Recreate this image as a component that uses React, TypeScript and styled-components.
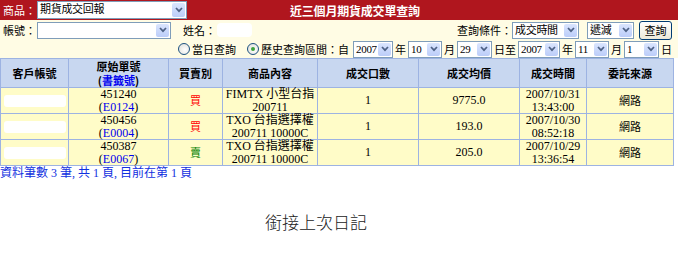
import styled, { createGlobalStyle } from 'styled-components';

const GlobalStyle = createGlobalStyle`
  body {
    margin: 0;
    background: #fff;
    font-family: "Liberation Serif", "Noto Sans CJK TC", serif;
    font-size: 12px;
    color: #000;
  }
`;

const cjk = `"Noto Sans CJK TC", "Liberation Sans", sans-serif`;

const rows = [
  {
    no: '451240',
    mark: 'E0124',
    side: '買',
    buy: true,
    item: ['FIMTX 小型台指', '200711'],
    qty: '1',
    price: '9775.0',
    time: ['2007/10/31', '13:43:00'],
  },
  {
    no: '450456',
    mark: 'E0004',
    side: '買',
    buy: true,
    item: ['TXO 台指選擇權', '200711 10000C'],
    qty: '1',
    price: '193.0',
    time: ['2007/10/30', '08:52:18'],
  },
  {
    no: '450387',
    mark: 'E0067',
    side: '賣',
    buy: false,
    item: ['TXO 台指選擇權', '200711 10000C'],
    qty: '1',
    price: '205.0',
    time: ['2007/10/29', '13:36:54'],
  },
];

const Chevron = () => (
  <svg width="8" height="6" viewBox="0 0 8 6">
    <path d="M1 1 L4 4.2 L7 1" fill="none" stroke="#4d6185" strokeWidth="1.7" />
  </svg>
);

const Select = ({ w, h = 17, value = '', ml = 0 }: { w: number; h?: number; value?: string; ml?: number }) => (
  <SelectBox $w={w} $h={h} $ml={ml}>
    <SelectValue>{value}</SelectValue>
    <ArrowBtn>
      <Chevron />
    </ArrowBtn>
  </SelectBox>
);

const App = () => {
  return (
    <>
      <GlobalStyle />
      <TopBar>
        <BarLabel>商品：</BarLabel>
        <Select w={150} h={18} value="期貨成交回報" />
        <Title>近三個月期貨成交單查詢</Title>
      </TopBar>

      <FormRow>
        <Label $w={34}>帳號：</Label>
        <Select w={134} />
        <Label $ml={12}>姓名：</Label>
        <Blank />
        <Spacer />
        <Label>查詢條件：</Label>
        <Select w={67} value="成交時間" />
        <Select w={47} value="遞減" ml={8} />
        <QueryBtn>查詢</QueryBtn>
      </FormRow>

      <RangeRow>
        <Radio />
        <Label $ml={2}>當日查詢</Label>
        <Radio $checked $ml={11} />
        <Label $ml={2}>歷史查詢區間：自</Label>
        <Select w={40} value="2007" ml={4} />
        <Unit>年</Unit>
        <Select w={34} value="10" />
        <Unit>月</Unit>
        <Select w={35} value="29" />
        <Unit>日至</Unit>
        <Select w={42} value="2007" />
        <Unit>年</Unit>
        <Select w={34} value="11" />
        <Unit>月</Unit>
        <Select w={35} value="1" />
        <Unit>日</Unit>
      </RangeRow>

      <Table>
        <colgroup>
          <col style={{ width: 68 }} />
          <col style={{ width: 100 }} />
          <col style={{ width: 54 }} />
          <col style={{ width: 95 }} />
          <col style={{ width: 101 }} />
          <col style={{ width: 101 }} />
          <col style={{ width: 67 }} />
          <col style={{ width: 87 }} />
        </colgroup>
        <thead>
          <tr>
            <Th>客戶帳號</Th>
            <Th>
              原始單號
              <br />(<BlueBold>書籤號</BlueBold>)
            </Th>
            <Th>買賣別</Th>
            <Th>商品內容</Th>
            <Th>成交口數</Th>
            <Th>成交均價</Th>
            <Th>成交時間</Th>
            <Th>委託來源</Th>
          </tr>
        </thead>
        <tbody>
          {rows.map((r) => (
            <tr key={r.no}>
              <Td $left>
                <Hidden />
              </Td>
              <Td>
                {r.no}
                <br />(<Blue>{r.mark}</Blue>)
              </Td>
              <Td>
                <Side $buy={r.buy}>{r.side}</Side>
              </Td>
              <Td>
                {r.item[0]}
                <br />
                {r.item[1]}
              </Td>
              <Td>{r.qty}</Td>
              <Td>{r.price}</Td>
              <Td>
                {r.time[0]}
                <br />
                {r.time[1]}
              </Td>
              <Td>
                <Cjk>網路</Cjk>
              </Td>
            </tr>
          ))}
        </tbody>
      </Table>

      <Summary>資料筆數 3 筆, 共 1 頁, 目前在第 1 頁</Summary>

      <Note>銜接上次日記</Note>
    </>
  );
};

export default App;

/* ---------------- styled-components ---------------- */

const TopBar = styled.div`
  height: 20px;
  background: #b0161e;
  display: flex;
  align-items: center;
  padding-left: 3px;
`;

const BarLabel = styled.span`
  width: 34px;
  color: #fff;
  font-family: ${cjk};
  font-size: 11px;
`;

const Title = styled.div`
  margin-left: 103px;
  color: #fff;
  font-family: ${cjk};
  font-size: 12px;
  font-weight: bold;
  letter-spacing: -0.2px;
`;

const FormRow = styled.div`
  height: 20px;
  background: #fffce4;
  display: flex;
  align-items: center;
  padding: 0 6px 0 3px;
`;

const RangeRow = styled.div`
  height: 18px;
  background: #fffce4;
  display: flex;
  align-items: center;
  padding-left: 178px;
`;

const Label = styled.span<{ $ml?: number; $w?: number }>`
  width: ${({ $w }) => ($w ? `${$w}px` : 'auto')};
  margin-left: ${({ $ml }) => $ml ?? 0}px;
  font-family: ${cjk};
  font-size: 11px;
  white-space: nowrap;
  flex: none;
`;

const Unit = styled.span`
  margin: 0 2px;
  font-family: ${cjk};
  font-size: 11px;
  white-space: nowrap;
`;

const Spacer = styled.div`
  flex: 1;
`;

const Blank = styled.div`
  width: 35px;
  height: 14px;
  margin-left: 1px;
  background: #fff;
  border-radius: 4px;
`;

const SelectBox = styled.div<{ $w: number; $h: number; $ml: number }>`
  width: ${({ $w }) => $w}px;
  height: ${({ $h }) => $h}px;
  margin-left: ${({ $ml }) => $ml}px;
  box-sizing: border-box;
  border: 1px solid #7f9db9;
  background: #fff;
  display: flex;
  align-items: stretch;
  flex: none;
`;

const SelectValue = styled.span`
  flex: 1;
  min-width: 0;
  padding-left: 2px;
  font-family: "Liberation Serif", "Noto Sans CJK TC", serif;
  font-size: 11px;
  line-height: 15px;
  letter-spacing: -0.3px;
  white-space: nowrap;
  overflow: hidden;
`;

const ArrowBtn = styled.span`
  width: 13px;
  margin: 1px;
  background: linear-gradient(#dae5fe, #bccdf9);
  border-radius: 2px;
  display: flex;
  align-items: center;
  justify-content: center;
  flex: none;
`;

const QueryBtn = styled.button`
  width: 33px;
  height: 19px;
  margin-left: 5px;
  padding: 0;
  border: 1px solid #003c74;
  border-radius: 3px;
  background: linear-gradient(#fff, #ece9d8);
  font-family: ${cjk};
  font-size: 11px;
  line-height: 15px;
  color: #000;
`;

const Radio = styled.span<{ $checked?: boolean; $ml?: number }>`
  position: relative;
  width: 12px;
  height: 12px;
  margin-left: ${({ $ml }) => $ml ?? 0}px;
  box-sizing: border-box;
  border: 1px solid #1c5180;
  border-radius: 50%;
  background: radial-gradient(circle at 60% 60%, #fff, #dcdcd6);
  flex: none;

  &::after {
    content: '';
    display: ${({ $checked }) => ($checked ? 'block' : 'none')};
    position: absolute;
    left: 3px;
    top: 3px;
    width: 4px;
    height: 4px;
    border-radius: 50%;
    background: #3da23b;
  }
`;

const Table = styled.table`
  width: 673px;
  table-layout: fixed;
  border-collapse: collapse;
  border: 1px solid #9db3e2;
`;

const Th = styled.th`
  height: 28px;
  padding: 0;
  background: #c8d7f0;
  border: 1px solid #9db3e2;
  font-family: ${cjk};
  font-size: 11px;
  font-weight: bold;
  line-height: 14px;
  text-align: center;
`;

const Td = styled.td<{ $left?: boolean }>`
  height: 25px;
  padding: 0 ${({ $left }) => ($left ? '3px' : '0')};
  background: #fffcc8;
  border: 1px solid #9db3e2;
  font-size: 12px;
  line-height: 12.5px;
  text-align: center;
  vertical-align: middle;
`;

const Cjk = styled.span`
  font-family: ${cjk};
  font-size: 11px;
`;

const Hidden = styled.div`
  width: 62px;
  height: 12px;
  background: #fff;
  border-radius: 3px;
`;

const Blue = styled.span`
  color: #0000ee;
`;

const BlueBold = styled.span`
  color: #0000ee;
  font-weight: bold;
`;

const Side = styled.span<{ $buy: boolean }>`
  color: ${({ $buy }) => ($buy ? '#ff0000' : '#008000')};
  font-family: ${cjk};
  font-size: 11px;
`;

const Summary = styled.div`
  margin-top: 1px;
  color: #1030e0;
  font-size: 12px;
  line-height: 13px;
`;

const Note = styled.div`
  margin-top: 29px;
  padding-left: 265px;
  color: #222;
  font-family: ${cjk};
  font-size: 17px;
  font-weight: 300;
`;
